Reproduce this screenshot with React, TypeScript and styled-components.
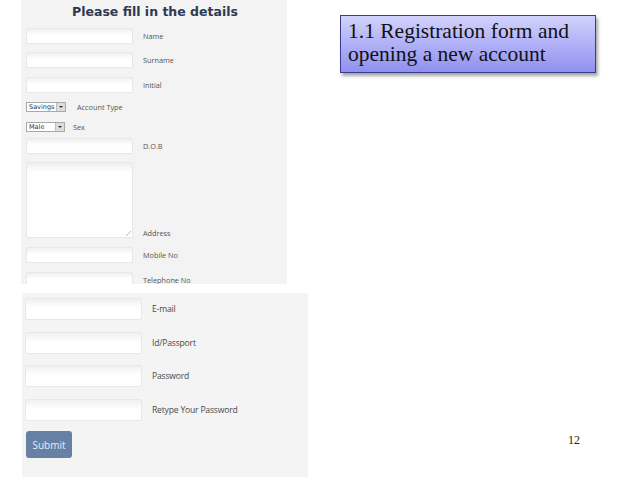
import React from "react";
import styled, { createGlobalStyle } from "styled-components";

const Global = createGlobalStyle`
  html, body { margin: 0; padding: 0; background: #ffffff; }
`;

type FieldProps = { label: string; top: number };

const topFields: FieldProps[] = [
  { label: "Name", top: 0 },
  { label: "Surname", top: 8 },
  { label: "Initial", top: 9 },
];

const bottomFields: FieldProps[] = [
  { label: "E-mail", top: 5 },
  { label: "Id/Passport", top: 12 },
  { label: "Password", top: 11 },
  { label: "Retype Your Password", top: 12 },
];

export default function App() {
  return (
    <Slide>
      <Global />
      <Shots>
        <TopPanel>
          <Title>Please fill in the details</Title>
          {topFields.map((f) => (
            <Row key={f.label} $top={f.top}>
              <Input />
              <Label>{f.label}</Label>
            </Row>
          ))}
          <Row $top={9}>
            <Select $width={40}>
              <span>Savings</span>
              <Arrow />
            </Select>
            <SmallLabel $gap={11}>Account Type</SmallLabel>
          </Row>
          <Row $top={10}>
            <Select $width={39}>
              <span>Male</span>
              <Arrow />
            </Select>
            <SmallLabel $gap={8}>Sex</SmallLabel>
          </Row>
          <Row $top={6}>
            <Input />
            <Label>D.O.B</Label>
          </Row>
          <Row $top={8} $bottom>
            <TextArea>
              <Grip />
            </TextArea>
            <Label>Address</Label>
          </Row>
          <Row $top={9}>
            <Input />
            <Label>Mobile No</Label>
          </Row>
          <Row $top={9}>
            <Input />
            <Label>Telephone No</Label>
          </Row>
        </TopPanel>
        <BottomPanel>
          {bottomFields.map((f) => (
            <Row key={f.label} $top={f.top}>
              <WideInput />
              <WideLabel>{f.label}</WideLabel>
            </Row>
          ))}
          <Submit>Submit</Submit>
        </BottomPanel>
      </Shots>
      <Side>
        <Callout>
          1.1 Registration form and
          <br />
          opening a new account
        </Callout>
        <PageNumber>12</PageNumber>
      </Side>
    </Slide>
  );
}

const Slide = styled.div`
  width: 638px;
  height: 479px;
  display: flex;
  background: #ffffff;
  overflow: hidden;
`;

const Shots = styled.div`
  width: 308px;
  display: flex;
  flex-direction: column;
  gap: 9px;
`;

const TopPanel = styled.div`
  margin-left: 21px;
  width: 266px;
  height: 284px;
  box-sizing: border-box;
  padding-left: 5px;
  background: #f3f3f3;
  overflow: hidden;
`;

const Title = styled.div`
  height: 28px;
  box-sizing: border-box;
  padding-top: 4px;
  padding-right: 3px;
  text-align: center;
  font-family: "DejaVu Sans", Verdana, sans-serif;
  font-weight: bold;
  font-size: 12.5px;
  line-height: 16px;
  color: #2e3a52;
`;

const Row = styled.div<{ $top: number; $bottom?: boolean }>`
  display: flex;
  align-items: ${(p) => (p.$bottom ? "flex-end" : "center")};
  margin-top: ${(p) => p.$top}px;
`;

const Input = styled.div`
  width: 107px;
  height: 16px;
  box-sizing: border-box;
  border: 1px solid #e8e8e8;
  border-radius: 2px;
  background: linear-gradient(#f0f0f0, #ffffff 45%);
  flex-shrink: 0;
`;

const TextArea = styled(Input)`
  position: relative;
  height: 76px;
  background: linear-gradient(#eeeeee, #ffffff 12%);
`;

const Grip = styled.div`
  position: absolute;
  right: 1px;
  bottom: 1px;
  width: 5px;
  height: 5px;
  background: linear-gradient(
    135deg,
    transparent 45%,
    #b8b8b8 45%,
    #b8b8b8 55%,
    transparent 55%
  );
`;

const Label = styled.span`
  margin-left: 10px;
  font-family: "Open Sans", "DejaVu Sans", sans-serif;
  font-size: 7.3px;
  color: #555555;
  white-space: nowrap;
`;

const SmallLabel = styled(Label)<{ $gap: number }>`
  margin-left: ${(p) => p.$gap}px;
`;

const Select = styled.div<{ $width: number }>`
  width: ${(p) => p.$width}px;
  height: 10px;
  box-sizing: border-box;
  border: 1px solid #a9a9a9;
  background: #ffffff;
  display: flex;
  align-items: center;
  justify-content: space-between;
  padding-left: 2px;
  font-family: "DejaVu Sans", sans-serif;
  font-size: 6.5px;
  color: #333333;
  flex-shrink: 0;
`;

const Arrow = styled.div`
  width: 8px;
  height: 8px;
  background: #dcdcdc;
  border-left: 1px solid #bdbdbd;
  display: flex;
  align-items: center;
  justify-content: center;
  &::after {
    content: "";
    border-left: 2px solid transparent;
    border-right: 2px solid transparent;
    border-top: 2px solid #333333;
  }
`;

const BottomPanel = styled.div`
  margin-left: 22px;
  width: 286px;
  height: 184px;
  box-sizing: border-box;
  padding-left: 3px;
  background: #f4f4f4;
  overflow: hidden;
`;

const WideInput = styled(Input)`
  width: 117px;
  height: 22px;
`;

const WideLabel = styled(Label)`
  font-size: 8.6px;
  letter-spacing: -0.2px;
  color: #4a4a4a;
`;

const Submit = styled.div`
  margin-top: 10px;
  margin-left: 1px;
  width: 46px;
  height: 27px;
  border-radius: 3px;
  background: #6680a6;
  color: #e8edf5;
  font-family: "Open Sans", "DejaVu Sans", sans-serif;
  font-size: 10px;
  display: flex;
  align-items: center;
  justify-content: center;
`;

const Side = styled.div`
  flex: 1;
  display: flex;
  flex-direction: column;
  padding: 15px 42px 32px 32px;
`;

const Callout = styled.div`
  width: 256px;
  height: 58px;
  box-sizing: border-box;
  padding: 4px 0 0 7px;
  border: 1px solid #3c3c8c;
  background: linear-gradient(#d2d2fd, #9090f0);
  box-shadow: 2px 3px 3px rgba(0, 0, 0, 0.35);
  font-family: "Liberation Serif", "Times New Roman", serif;
  font-size: 21.5px;
  line-height: 23px;
  color: #111111;
  white-space: nowrap;
`;

const PageNumber = styled.div`
  margin-top: auto;
  align-self: flex-end;
  padding-right: 16px;
  font-family: "Liberation Serif", "Times New Roman", serif;
  font-size: 12px;
  line-height: 14px;
  color: #222222;
`;
